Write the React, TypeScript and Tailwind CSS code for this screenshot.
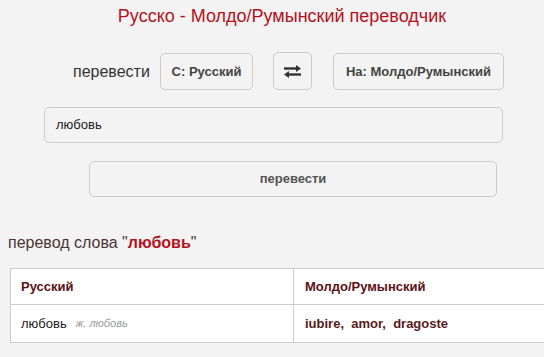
import React from "react";

function SwapIcon() {
  return (
    <svg width="19" height="14" viewBox="0 0 19 14" fill="none">
      <path d="M1 4.5H14" stroke="#333" strokeWidth="2.4" />
      <path d="M13 1L18 4.5L13 8Z" fill="#333" />
      <path d="M18 10.5H5" stroke="#333" strokeWidth="2.4" />
      <path d="M6 7L1 10.5L6 14Z" fill="#333" />
    </svg>
  );
}

export default function App() {
  const font = { fontFamily: '"Liberation Sans", Arial, sans-serif' };
  return (
    <div className="w-[544px] h-[357px] overflow-hidden bg-[#f3f3f3]" style={font}>
      <div className="w-[564px] flex flex-col">
        <h1 className="text-center text-[18px] leading-[22px] text-[#b3121d] mt-[5px] font-normal">
          Русско - Молдо/Румынский переводчик
        </h1>
        <div className="flex items-center mt-[26px] pl-[73px] h-[37px]">
          <span className="text-[16px] text-[#333] w-[87px]">перевести</span>
          <button className="w-[93px] h-[37px] border border-[#ccc] rounded-[5px] text-[13px] font-bold text-[#444]">
            С: Русский
          </button>
          <button className="ml-[20px] w-[39px] h-[38px] -mt-[1px] border border-[#ccc] rounded-[5px] flex items-center justify-center">
            <SwapIcon />
          </button>
          <button className="ml-[21px] w-[171px] h-[37px] border border-[#ccc] rounded-[5px] text-[13px] font-bold text-[#444]">
            На: Молдо/Румынский
          </button>
        </div>
        <div className="ml-[44px] mt-[17px] w-[459px] h-[36px] border border-[#ccc] rounded-[5px] flex items-center pl-[11px] text-[13px] text-[#222]">
          любовь
        </div>
        <button className="ml-[89px] mt-[18px] w-[408px] h-[36px] border border-[#ccc] rounded-[5px] text-[13px] font-bold text-[#555]">
          перевести
        </button>
        <div className="ml-[8px] mt-[36px] text-[16px] leading-[20px] text-[#4a3535]">
          перевод слова "<span className="font-bold text-[#b3121d]">любовь</span>"
        </div>
        <div className="ml-[10px] mr-[10px] mt-[15px] border border-[#ccc] bg-white">
          <div className="flex h-[36px] border-b border-[#ccc]">
            <div className="w-[283px] border-r border-[#ccc] flex items-center pl-[10px] text-[13px] font-bold text-[#5a1212]">
              Русский
            </div>
            <div className="flex-1 flex items-center pl-[11px] text-[13px] font-bold text-[#5a1212]">
              Молдо/Румынский
            </div>
          </div>
          <div className="flex h-[37px]">
            <div className="w-[283px] border-r border-[#ccc] flex items-center pl-[10px] text-[13px] text-[#222]">
              любовь
              <span className="ml-[9px] text-[11px] italic text-[#999]">ж. любовь</span>
            </div>
            <div className="flex-1 flex items-center pl-[11px] text-[13px] font-bold text-[#5a1a1a]">
              iubire,&nbsp; amor,&nbsp; dragoste
            </div>
          </div>
        </div>
      </div>
    </div>
  );
}
